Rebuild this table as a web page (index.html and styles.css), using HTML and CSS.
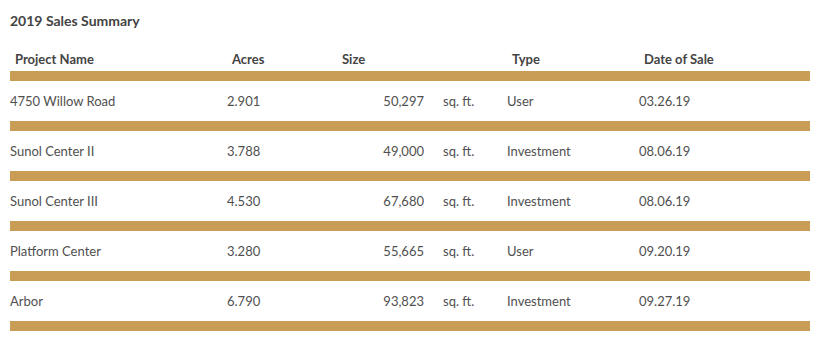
FILE: index.html
```html
<!DOCTYPE html>
<html lang="en">
<head>
  <meta charset="UTF-8">
  <title>2019 Sales Summary</title>
  <link rel="stylesheet" href="styles.css">
</head>
<body>
  <div class="summary">
    <h3>2019 Sales Summary</h3>

    <table class="sales">
      <colgroup>
        <col class="c-name">
        <col class="c-acres">
        <col class="c-size">
        <col class="c-unit">
        <col class="c-type">
        <col class="c-date">
      </colgroup>
      <thead>
        <tr>
          <th>Project Name</th>
          <th>Acres</th>
          <th>Size</th>
          <th></th>
          <th>Type</th>
          <th>Date of Sale</th>
        </tr>
      </thead>
      <tbody>
        <tr>
          <td>4750 Willow Road</td>
          <td>2.901</td>
          <td class="num">50,297</td>
          <td class="unit">sq. ft.</td>
          <td>User</td>
          <td>03.26.19</td>
        </tr>
        <tr>
          <td>Sunol Center II</td>
          <td>3.788</td>
          <td class="num">49,000</td>
          <td class="unit">sq. ft.</td>
          <td>Investment</td>
          <td>08.06.19</td>
        </tr>
        <tr>
          <td>Sunol Center III</td>
          <td>4.530</td>
          <td class="num">67,680</td>
          <td class="unit">sq. ft.</td>
          <td>Investment</td>
          <td>08.06.19</td>
        </tr>
        <tr>
          <td>Platform Center</td>
          <td>3.280</td>
          <td class="num">55,665</td>
          <td class="unit">sq. ft.</td>
          <td>User</td>
          <td>09.20.19</td>
        </tr>
        <tr>
          <td>Arbor</td>
          <td>6.790</td>
          <td class="num">93,823</td>
          <td class="unit">sq. ft.</td>
          <td>Investment</td>
          <td>09.27.19</td>
        </tr>
      </tbody>
    </table>
  </div>
</body>
</html>
```

FILE: styles.css
```css
body {
  margin: 0;
  padding: 12px 10px;
  background: #ffffff;
  font-family: 'Lato', 'Open Sans', sans-serif;
  color: #505050;
}

.summary {
  width: 800px;
}

h3 {
  margin: 0 0 20px;
  font-size: 14px;
  line-height: 18px;
  font-weight: 700;
  color: #444;
}

.sales {
  width: 800px;
  border-collapse: collapse;
  table-layout: fixed;
  font-size: 13px;
}

.c-name { width: 217px; }
.c-acres { width: 110px; }
.c-size { width: 87px; }
.c-unit { width: 83px; }
.c-type { width: 132px; }
.c-date { width: 171px; }

th, td {
  padding: 0;
  text-align: left;
  border-bottom: 10px solid #c99d55;
}

th {
  height: 26px;
  padding-left: 5px;
  padding-bottom: 4px;
  vertical-align: bottom;
  font-weight: 700;
  line-height: 16px;
  color: #444;
  box-sizing: border-box;
}

td {
  height: 40px;
  line-height: 16px;
  vertical-align: middle;
}

td.num {
  text-align: right;
}

td.unit {
  padding-left: 19px;
}
```
